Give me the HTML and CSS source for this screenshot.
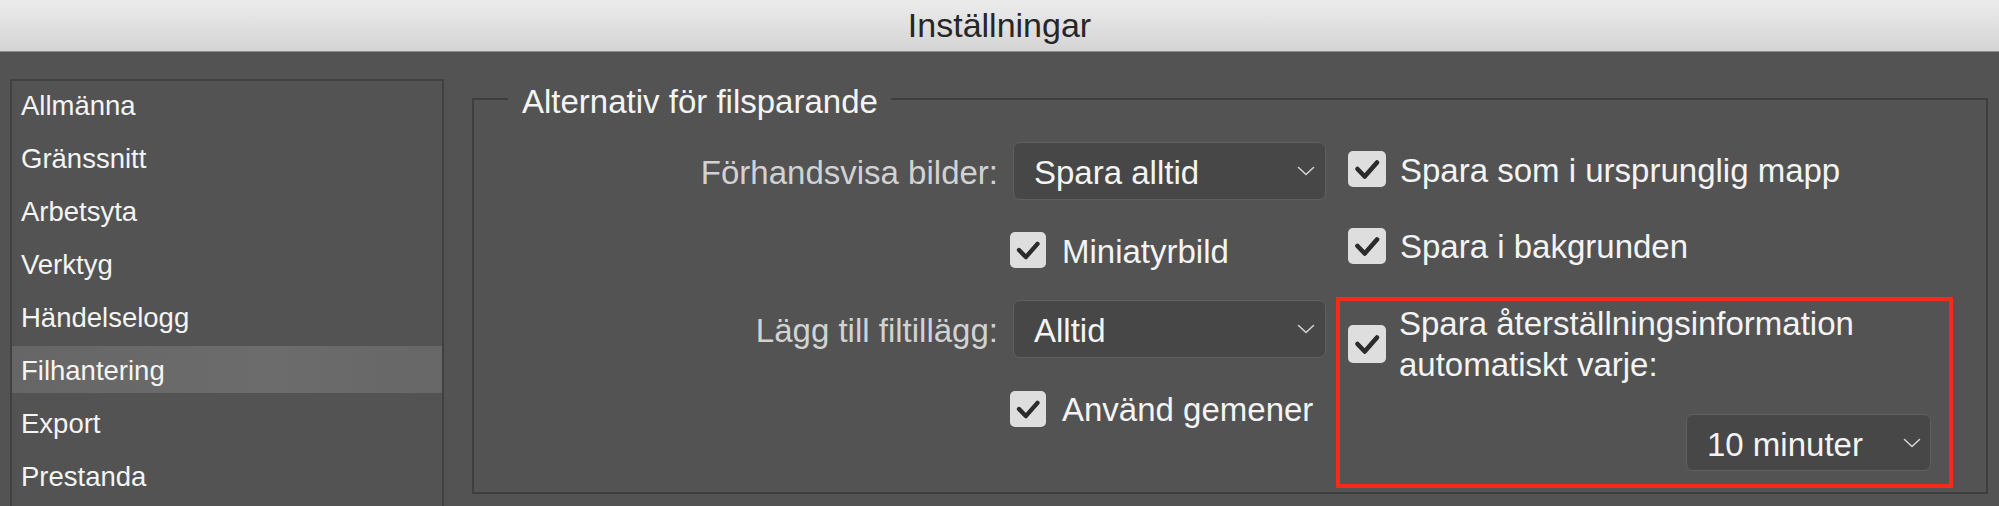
FILE: index.html
```html
<!DOCTYPE html>
<html lang="sv">
<head>
<meta charset="utf-8">
<title>Inställningar</title>
<link rel="stylesheet" href="styles.css">
</head>
<body>
<div class="titlebar">Inställningar</div>
<div class="content">
  <nav class="sidebar">
    <div class="nav-item">Allmänna</div>
    <div class="nav-item">Gränssnitt</div>
    <div class="nav-item">Arbetsyta</div>
    <div class="nav-item">Verktyg</div>
    <div class="nav-item">Händelselogg</div>
    <div class="nav-item active">Filhantering</div>
    <div class="nav-item">Export</div>
    <div class="nav-item">Prestanda</div>
  </nav>
  <fieldset class="group">
    <legend class="group-title">Alternativ för filsparande</legend>
    <div class="group-body">
      <div class="form-grid">
        <div class="field-label">Förhandsvisa bilder:</div>
        <div class="select"><span class="select-text">Spara alltid</span><svg class="chev" width="18" height="10" viewBox="0 0 18 10"><path d="M1.5 1.5 L9 8.5 L16.5 1.5" fill="none" stroke="#d2d2d2" stroke-width="1.6" stroke-linecap="round" stroke-linejoin="round"/></svg></div>
        <div class="check-row grid-check"><span class="cb"><svg width="36" height="36" viewBox="0 0 38 36"><path d="M9.5 18 L16.7 25.5 L29 11.5" fill="none" stroke="#2b2b2b" stroke-width="4.6" stroke-linecap="round" stroke-linejoin="round"/></svg></span><span class="check-text">Miniatyrbild</span></div>
        <div class="field-label">Lägg till filtillägg:</div>
        <div class="select"><span class="select-text">Alltid</span><svg class="chev" width="18" height="10" viewBox="0 0 18 10"><path d="M1.5 1.5 L9 8.5 L16.5 1.5" fill="none" stroke="#d2d2d2" stroke-width="1.6" stroke-linecap="round" stroke-linejoin="round"/></svg></div>
        <div class="check-row grid-check"><span class="cb"><svg width="36" height="36" viewBox="0 0 38 36"><path d="M9.5 18 L16.7 25.5 L29 11.5" fill="none" stroke="#2b2b2b" stroke-width="4.6" stroke-linecap="round" stroke-linejoin="round"/></svg></span><span class="check-text">Använd gemener</span></div>
      </div>
      <div class="right-col">
        <div class="check-row right-check first"><span class="cb wide"><svg width="38" height="36" viewBox="0 0 38 36"><path d="M9.5 18 L16.7 25.5 L29 11.5" fill="none" stroke="#2b2b2b" stroke-width="4.6" stroke-linecap="round" stroke-linejoin="round"/></svg></span><span class="check-text">Spara som i ursprunglig mapp</span></div>
        <div class="check-row right-check second"><span class="cb wide"><svg width="38" height="36" viewBox="0 0 38 36"><path d="M9.5 18 L16.7 25.5 L29 11.5" fill="none" stroke="#2b2b2b" stroke-width="4.6" stroke-linecap="round" stroke-linejoin="round"/></svg></span><span class="check-text">Spara i bakgrunden</span></div>
        <div class="highlight">
          <div class="check-row recovery"><span class="cb wide tall"><svg width="38" height="38" viewBox="0 0 38 38"><path d="M9.5 19 L16.7 26.5 L29 12.5" fill="none" stroke="#2b2b2b" stroke-width="4.6" stroke-linecap="round" stroke-linejoin="round"/></svg></span><span class="check-text two-line">Spara återställningsinformation<br>automatiskt varje:</span></div>
          <div class="select small"><span class="select-text">10 minuter</span><svg class="chev" width="18" height="10" viewBox="0 0 18 10"><path d="M1.5 1.5 L9 8.5 L16.5 1.5" fill="none" stroke="#d2d2d2" stroke-width="1.6" stroke-linecap="round" stroke-linejoin="round"/></svg></div>
        </div>
      </div>
    </div>
  </fieldset>
</div>
</body>
</html>
```

FILE: styles.css
```css
* {
  box-sizing: border-box;
}

html, body {
  margin: 0;
  padding: 0;
  width: 1999px;
  height: 506px;
  overflow: hidden;
  background: #535353;
  font-family: "Liberation Sans", Arial, sans-serif;
  color: #f2f2f2;
}

.titlebar {
  height: 52px;
  line-height: 51px;
  text-align: center;
  font-size: 34px;
  color: #262626;
  background: linear-gradient(#ececec, #d4d4d4);
  border-bottom: 1px solid #8a8a8a;
}

.content {
  display: flex;
  align-items: flex-start;
  padding-left: 10px;
}

.sidebar {
  width: 434px;
  height: 427px;
  margin-top: 27px;
  border: 2px solid #404040;
  border-bottom: none;
  display: flex;
  flex-direction: column;
  flex-shrink: 0;
  overflow: hidden;
}

.nav-item {
  height: 47px;
  margin-bottom: 6px;
  line-height: 49px;
  padding-left: 9px;
  font-size: 27.5px;
  color: #f4f4f4;
  flex-shrink: 0;
}

.nav-item.active {
  background: linear-gradient(90deg, #666666, #6c6c6c 60%, #676767);
}

.group {
  flex: 1;
  margin: 25px 11px 0 28px;
  padding: 0;
  min-width: 0;
  border: 2px solid #3e3e3e;
}

.group-title {
  margin-left: 34px;
  padding: 6px 13px 0 14px;
  line-height: 38px;
  font-size: 33px;
  color: #f4f4f4;
}

.group-body {
  height: 371px;
  padding-top: 21px;
  display: flex;
  gap: 10px;
}

.form-grid {
  display: grid;
  grid-template-columns: 524px 313px;
  grid-template-rows: 58px 36px 58px 37px;
  column-gap: 15px;
  row-gap: 32px;
  align-content: start;
}

.field-label {
  grid-column: 1;
  display: flex;
  align-items: center;
  justify-content: flex-end;
  padding-top: 4px;
  font-size: 33px;
  color: #d2d2d2;
}

.select {
  grid-column: 2;
  height: 58px;
  display: flex;
  align-items: center;
  justify-content: space-between;
  padding: 4px 10px 0 20px;
  background: #474747;
  border: 1.5px solid #606060;
  border-radius: 7px;
  font-size: 33px;
  color: #f4f4f4;
}

.chev {
  margin-top: -4px;
}

.check-row {
  display: flex;
  align-items: center;
  font-size: 33px;
  color: #f4f4f4;
}

.grid-check {
  grid-column: 2;
  margin-left: -3px;
  gap: 16px;
}

.check-text {
  padding-top: 3px;
}

.cb {
  width: 36px;
  height: 36px;
  flex-shrink: 0;
  display: flex;
  align-items: center;
  justify-content: center;
  background: #dedede;
  border-radius: 5px;
}

.cb.wide {
  width: 38px;
}

.cb.tall {
  height: 38px;
}

.right-col {
  width: 617px;
  padding-top: 9px;
  display: flex;
  flex-direction: column;
}

.right-check {
  padding-left: 12px;
  gap: 14px;
  height: 36px;
}

.right-check.first {
  margin-bottom: 40px;
}

.right-check.second {
  height: 37px;
  margin-bottom: 33px;
}

.highlight {
  height: 191px;
  border: 4px solid #f62a18;
  padding: 2px 18px 13px 8px;
  display: flex;
  flex-direction: column;
}

.recovery {
  gap: 13px;
}

.two-line {
  padding-top: 0;
  line-height: 41px;
}

.select.small {
  width: 245px;
  height: 57px;
  margin-top: 29px;
  align-self: flex-end;
  padding: 4px 9px 0 20px;
}
```
